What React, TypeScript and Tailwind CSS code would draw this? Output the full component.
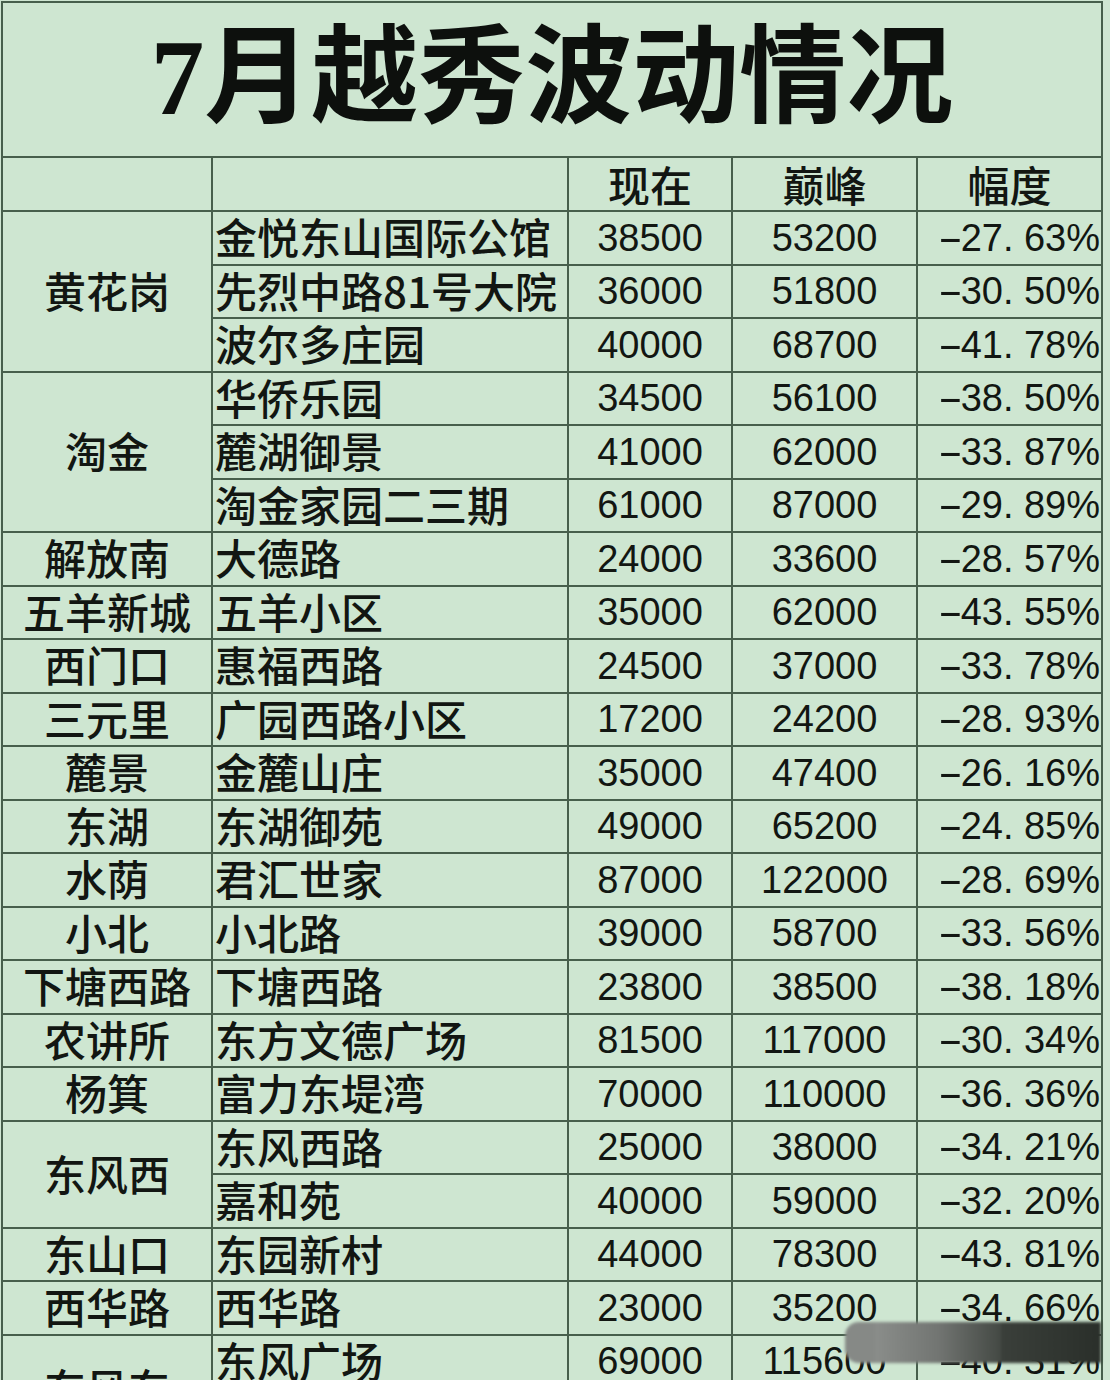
const groups: { area: string; rows: string[][] }[] = [
  {
    area: '黄花岗',
    rows: [
      ['金悦东山国际公馆', '38500', '53200', '-27.63%'],
      ['先烈中路81号大院', '36000', '51800', '-30.50%'],
      ['波尔多庄园', '40000', '68700', '-41.78%'],
    ],
  },
  {
    area: '淘金',
    rows: [
      ['华侨乐园', '34500', '56100', '-38.50%'],
      ['麓湖御景', '41000', '62000', '-33.87%'],
      ['淘金家园二三期', '61000', '87000', '-29.89%'],
    ],
  },
  { area: '解放南', rows: [['大德路', '24000', '33600', '-28.57%']] },
  { area: '五羊新城', rows: [['五羊小区', '35000', '62000', '-43.55%']] },
  { area: '西门口', rows: [['惠福西路', '24500', '37000', '-33.78%']] },
  { area: '三元里', rows: [['广园西路小区', '17200', '24200', '-28.93%']] },
  { area: '麓景', rows: [['金麓山庄', '35000', '47400', '-26.16%']] },
  { area: '东湖', rows: [['东湖御苑', '49000', '65200', '-24.85%']] },
  { area: '水荫', rows: [['君汇世家', '87000', '122000', '-28.69%']] },
  { area: '小北', rows: [['小北路', '39000', '58700', '-33.56%']] },
  { area: '下塘西路', rows: [['下塘西路', '23800', '38500', '-38.18%']] },
  { area: '农讲所', rows: [['东方文德广场', '81500', '117000', '-30.34%']] },
  { area: '杨箕', rows: [['富力东堤湾', '70000', '110000', '-36.36%']] },
  {
    area: '东风西',
    rows: [
      ['东风西路', '25000', '38000', '-34.21%'],
      ['嘉和苑', '40000', '59000', '-32.20%'],
    ],
  },
  { area: '东山口', rows: [['东园新村', '44000', '78300', '-43.81%']] },
  { area: '西华路', rows: [['西华路', '23000', '35200', '-34.66%']] },
  {
    area: '东风东',
    rows: [
      ['东风广场', '69000', '115600', '-40.31%'],
      ['', '', '', ''],
    ],
  },
];

const spans: Record<number, string> = {
  1: 'row-span-1',
  2: 'row-span-2',
  3: 'row-span-3',
};

const cell = 'bg-[#cee6d1] flex items-center';
const cjk = "font-['Noto_Sans_CJK_SC',sans-serif] font-medium text-[42px] leading-none text-[#121612]";
const num = "font-['Liberation_Sans',Arial,sans-serif] text-[38px] leading-none text-[#121612]";

function Percent({ value }: { value: string }) {
  if (!value) return null;
  const [whole, frac] = value.replace('-', '').split('.');
  return (
    <span className="whitespace-nowrap">
      <span className="inline-block w-[21px] text-center scale-x-[2]">-</span>
      {whole}
      <span className="inline-block w-[21px]">.</span>
      {frac}
    </span>
  );
}

export default function App() {
  return (
    <div className="relative w-[1110px] h-[1380px] overflow-hidden bg-[#cfe6d2]">
      <div className="ml-[1px] mt-[1px] w-[1102px] grid grid-cols-[208px_354px_162px_183px_183px] grid-rows-[153px_52px] auto-rows-[51.5px] gap-[2px] p-[2px] bg-[#475f4c]">
        {/* title */}
        <div className={`${cell} col-span-5 justify-center`}>
          <h1 className="font-['Liberation_Serif','Noto_Sans_CJK_SC',serif] font-bold text-[107px] leading-none text-[#0d100d] pb-[2px]">
            7月越秀波动情况
          </h1>
        </div>

        {/* header */}
        <div className={cell}></div>
        <div className={cell}></div>
        <div className={`${cell} justify-center ${cjk}`}>现在</div>
        <div className={`${cell} justify-center ${cjk}`}>巅峰</div>
        <div className={`${cell} justify-center ${cjk}`}>幅度</div>

        {groups.map((g) => [
          <div
            key={g.area}
            className={`${cell} ${spans[g.rows.length]} justify-center ${cjk} pb-[3px]`}
          >
            {g.area}
          </div>,
          ...g.rows.map((r, i) => [
            <div key={`${g.area}-${i}-n`} className={`${cell} pl-[2px] pb-[3px] ${cjk}`}>
              {r[0]}
            </div>,
            <div key={`${g.area}-${i}-a`} className={`${cell} justify-center ${num}`}>
              {r[1]}
            </div>,
            <div key={`${g.area}-${i}-b`} className={`${cell} justify-center ${num}`}>
              {r[2]}
            </div>,
            <div key={`${g.area}-${i}-c`} className={`${cell} justify-end pr-[1px] ${num}`}>
              <Percent value={r[3]} />
            </div>,
          ]),
        ])}
      </div>

      {/* blurred watermark */}
      <div className="absolute left-[845px] top-[1322px] w-[256px] h-[41px] flex blur-[1.5px]">
        <div className="w-[30px] rounded-l-[14px] bg-[#868986]"></div>
        <div className="flex-1 bg-gradient-to-r from-[#8a8d8a] via-[#727572] to-[#444944]"></div>
        <div className="w-[100px] bg-gradient-to-r from-[#3a3f3a] to-[#2a2f2a]"></div>
      </div>
    </div>
  );
}
